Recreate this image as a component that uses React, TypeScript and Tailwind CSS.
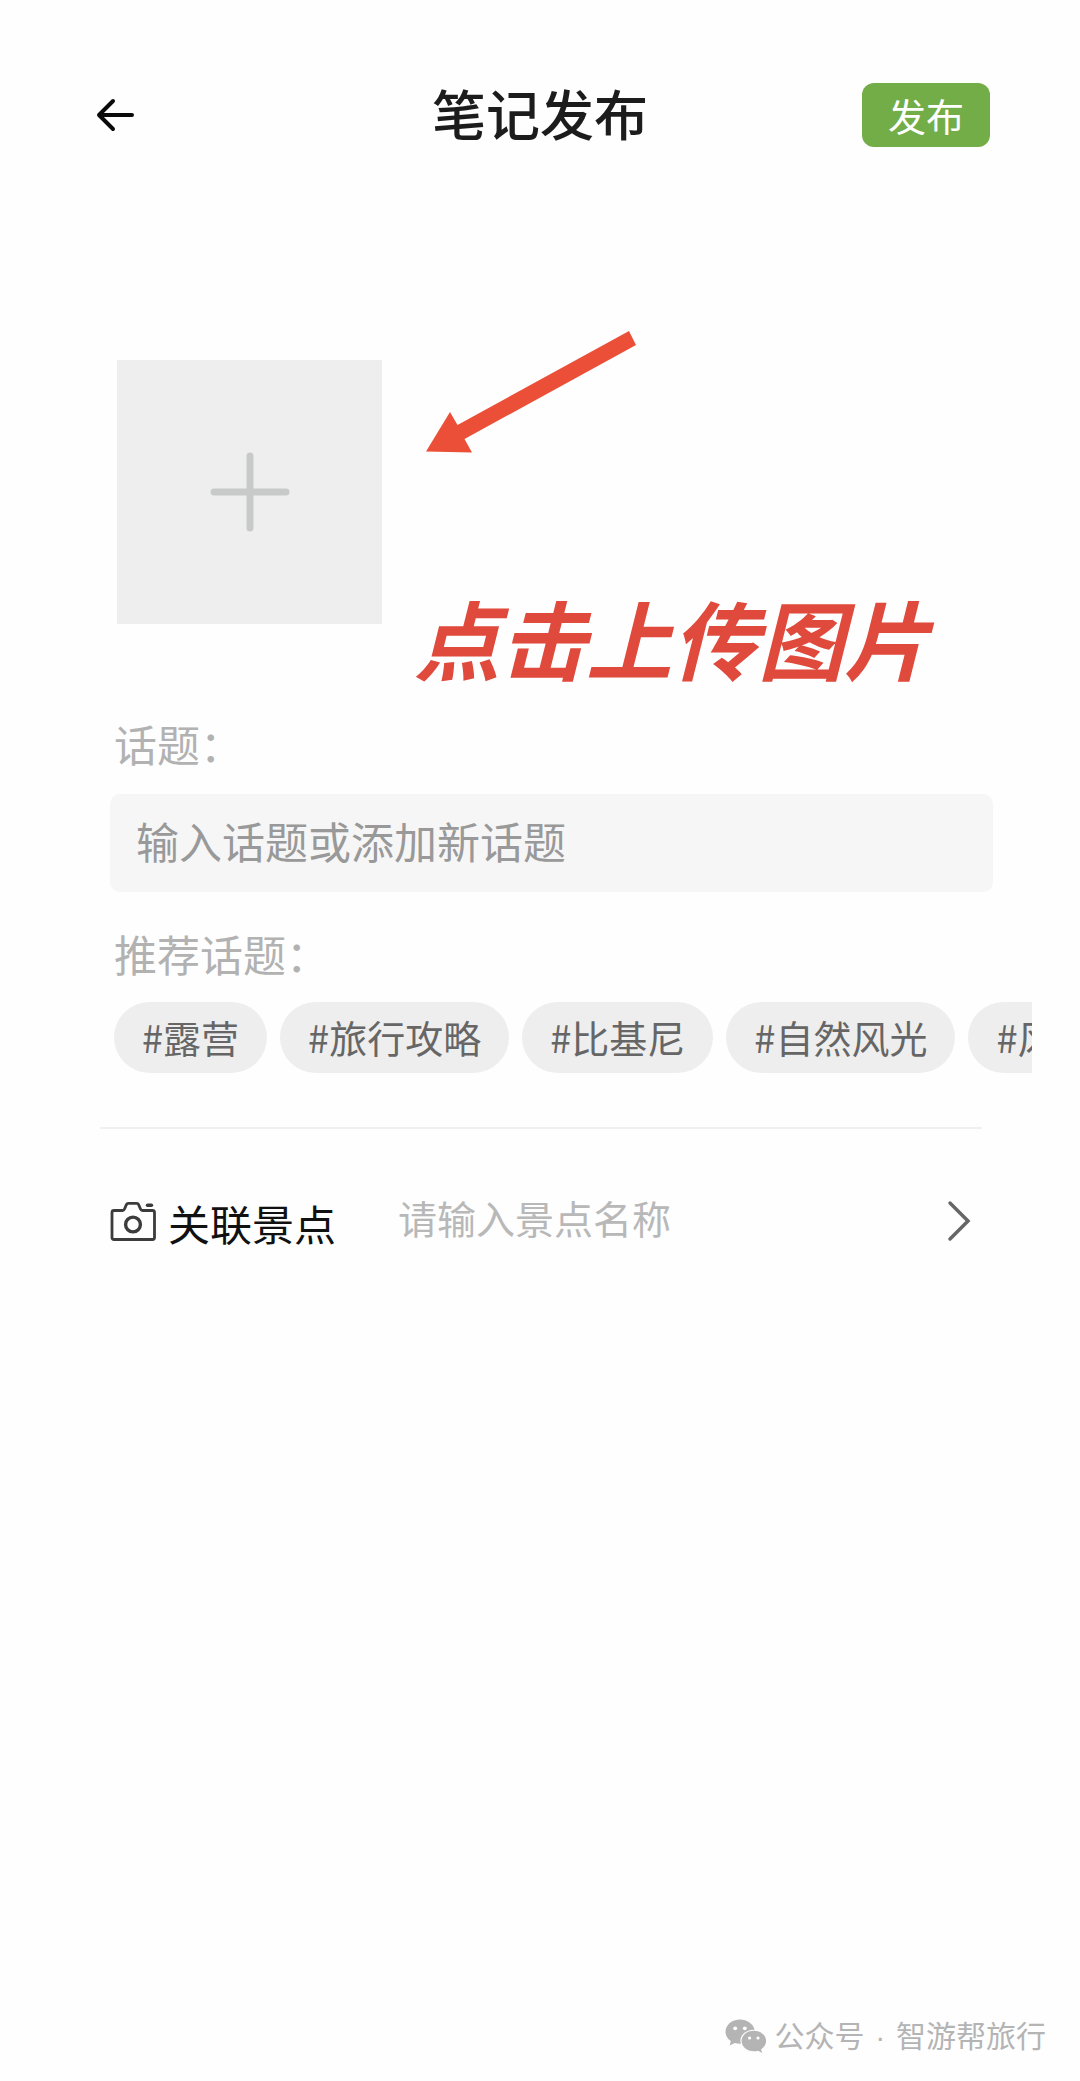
import React, { useState } from "react";

const TAGS = ["露营", "旅行攻略", "比基尼", "自然风光", "风景"];

function BackIcon() {
  return (
    <svg className="w-12 h-12" viewBox="0 0 48 48" fill="none" stroke="#0a0a0a" strokeWidth="4" strokeLinecap="round" strokeLinejoin="round">
      <path d="M42 24H9M23 10L9 24l14 14" />
    </svg>
  );
}

function CameraIcon() {
  return (
    <svg className="w-[46px] h-10 shrink-0" viewBox="0 0 46 40" fill="none" stroke="#3c3c3c" strokeWidth="2.8" strokeLinejoin="round">
      <path d="M4 9.500h8.500c1 0 1.500-.4 1.900-1.300l2-4.600c.4-.9.9-1.300 1.800-1.300h8.600c.9 0 1.400.4 1.800 1.300l2 4.600c.4.9.9 1.300 1.900 1.300H42.500c1.300 0 2 .7 2 2v25c0 1.300-.7 2-2 2H4c-1.300 0-2-.7-2-2v-25c0-1.300.7-2 2-2z" />
      <circle cx="23" cy="23.500" r="7.400" strokeWidth="3.400" />
      <path d="M37.500 4.200h4" strokeWidth="3.400" strokeLinecap="round" />
    </svg>
  );
}

function WechatIcon() {
  return (
    <svg className="w-[42px] h-[34px] shrink-0" viewBox="0 0 42 34">
      <path
        fill="#b4b4b4"
        d="M15 .5C6.900.500.500 6 .500 12.700c0 3.800 2 7 5.300 9.300L4.700 26.500l5-2.600c1.700.5 3.400.8 5.300.8h.9c-.3-1-.5-2-.5-3 0-6.200 6-11 13.300-11h.9C28.200 4.800 22.200.5 15 .5z"
      />
      <path
        fill="#b4b4b4"
        d="M28.800 11.800c-6.800 0-12.200 4.500-12.200 10.200s5.400 10.300 12.200 10.300c1.500 0 3-.2 4.300-.6l4 2.200-1-3.700c3-1.900 5-4.800 5-8.200 0-5.700-5.500-10.200-12.300-10.200z"
      />
      <g fill="#fefefe">
        <circle cx="10.200" cy="9.300" r="1.900" />
        <circle cx="19.800" cy="9.300" r="1.900" />
        <circle cx="24.600" cy="19" r="1.600" />
        <circle cx="33" cy="19" r="1.600" />
      </g>
    </svg>
  );
}

export default function App() {
  const [topic, setTopic] = useState("");
  const [spot, setSpot] = useState("");

  return (
    <div className="min-h-screen flex flex-col bg-[#fefefe] overflow-hidden font-['Noto_Sans_CJK_SC',sans-serif]">
      {/* Header */}
      <header className="flex items-center px-[90px] pt-[83px]">
        <div className="flex-1 flex">
          <button type="button" aria-label="返回">
            <BackIcon />
          </button>
        </div>
        <h1 className="pb-1 text-[54px] leading-[60px] font-medium text-[#1c1c1c]">笔记发布</h1>
        <div className="flex-1 flex justify-end">
          <button type="button" className="w-32 h-16 rounded-xl bg-[#72ad47] text-white text-[38px] leading-[64px]">
            发布
          </button>
        </div>
      </header>

      <main className="pl-[110px] pr-[87px] pt-[184px]">
        {/* Upload */}
        <section className="flex items-start gap-8 pl-[7px]">
          <button
            type="button"
            aria-label="上传图片"
            className="mt-[29px] w-[265px] h-[264px] shrink-0 flex items-center justify-center bg-[#eeeeee]"
          >
            <svg className="w-20 h-20" viewBox="0 0 80 80" stroke="#c8cac9" strokeWidth="7" strokeLinecap="round">
              <path d="M4 40h72M40 4v72" />
            </svg>
          </button>
          <div className="flex flex-col">
            <svg className="w-[212px] h-[122px] ml-3" viewBox="0 0 212 122" fill="#ec4f38">
              <path d="M0 120.500L24 81l7.500 13L203 0l7 14L38.500 108l7.500 13.500z" />
            </svg>
            <p className="mt-[120px] text-[86px] leading-[128px] font-bold italic whitespace-nowrap text-[#e04a3c]">
              点击上传图片
            </p>
          </div>
        </section>

        {/* Topic */}
        <label htmlFor="topic" className="block mt-[10px] pl-1 text-[43px] leading-[64px] text-[#b2b2b2]">
          话题：
        </label>
        <input
          id="topic"
          value={topic}
          onChange={(e) => setTopic(e.target.value)}
          placeholder="输入话题或添加新话题"
          className="block mt-[19px] w-full h-[98px] px-[26px] pb-1.5 rounded-[10px] bg-[#f6f6f6] text-[43px] text-[#333333] placeholder:text-[#999999] outline-none"
        />
        <h2 className="mt-[29px] pl-1 text-[43px] leading-[64px] text-[#b2b2b2]">推荐话题：</h2>
      </main>

      <div className="mt-[17px] ml-[114px] mr-12 flex gap-[13px] overflow-hidden">
        {TAGS.map((tag) => (
          <button
            key={tag}
            type="button"
            className="shrink-0 h-[71px] px-7 pb-0.5 rounded-full bg-[#eeeeee] text-[38px] text-[#666666]"
          >
            #{tag}
          </button>
        ))}
      </div>

      <hr className="mt-[54px] ml-[100px] mr-[98px] border-t-2 border-[#f0f0f0]" />

      {/* Linked spot */}
      <div className="mt-[58px] ml-[110px] mr-[107px] flex items-center">
        <CameraIcon />
        <label htmlFor="spot" className="ml-3 pt-1 text-[42px] leading-[64px] text-[#111111]">
          关联景点
        </label>
        <input
          id="spot"
          value={spot}
          onChange={(e) => setSpot(e.target.value)}
          placeholder="请输入景点名称"
          className="ml-[62px] flex-1 min-w-0 h-16 pb-2 text-[39px] text-[#333333] placeholder:text-[#b8b8b8] outline-none"
        />
        <button type="button" aria-label="选择景点">
          <svg className="w-7 h-11" viewBox="0 0 28 44" fill="none" stroke="#666666" strokeWidth="3.500" strokeLinecap="round">
            <path d="M5 4l18 18L5 40" />
          </svg>
        </button>
      </div>

      {/* Source */}
      <footer className="mt-auto pb-5 pr-[34px] flex items-center justify-end gap-2 text-[30px] leading-[48px] text-[#b4b4b4]">
        <WechatIcon />
        <span>
          公众号 <span className="mx-1 font-['Liberation_Sans',sans-serif]">·</span> 智游帮旅行
        </span>
      </footer>
    </div>
  );
}
